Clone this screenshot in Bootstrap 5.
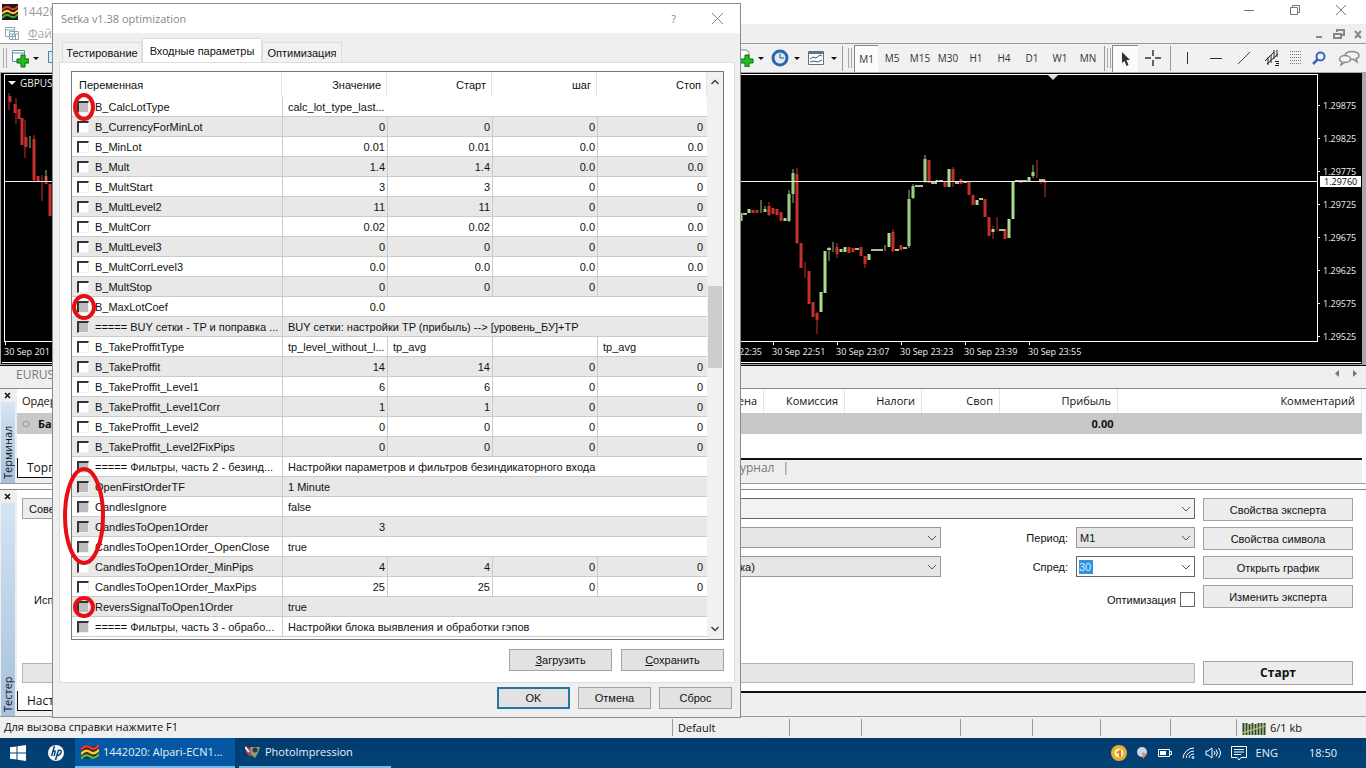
<!DOCTYPE html>
<html lang="ru">
<head>
<meta charset="utf-8">
<meta name="viewport" content="width=device-width, initial-scale=1">
<title>Setka v1.38 optimization</title>
<link href="https://cdn.jsdelivr.net/npm/bootstrap@5.3.0/dist/css/bootstrap.min.css" rel="stylesheet">
<style>
:root{--face:#efefef;--edge:#a0a0a0;--ui:"Open Sans","Noto Sans",sans-serif;--sys:"Liberation Sans",Arial,sans-serif}
body{font:11px/16px var(--sys);color:#111;background:#fff;overflow:hidden}
button,select,input{font:inherit;color:inherit}
svg{display:block;flex:none}
.bar-title{height:24px;font:12px/24px var(--ui);color:#999;padding:0 2px}
.bar-menu{height:20px;background:linear-gradient(90deg,#fff 55px,var(--face) 700px);border-bottom:1px solid #999;font:12px/18px var(--ui);color:#aaa}
.bar-tools{height:28px;background:#f1f1f1;padding-left:3px}
.tool-grid{display:grid;grid-template-columns:14px 14px 24px 10px 28px 8px 8px 8px 24px repeat(8,28px) 4px 6px 26px 30px 4px 30px 28px 28px 28px 20px 26px 34px;font:10px/24px var(--ui);color:#333}
.tool-grid>*{display:flex;align-items:center;justify-content:center;height:27px;padding:0;border:0;background:none}
.tool-grid .pressed{background:#fbfbfb;border-top:1px solid #888;border-left:1px solid #888}
.caret-dn{width:0;height:0;border:3px solid transparent;border-top-color:#111;border-bottom:0;display:inline-block}
.sep-line{width:1px;height:25px;background:#999}
.grip{width:4px;height:20px;border-left:1px solid #aaa;border-right:1px solid #aaa}
.wincap button{border:0;background:none;padding:0;width:46px;height:20px;display:flex;justify-content:center;align-items:center}
/* chart */
.chart-pane{background:#a8a8a8;padding:2px 5px 2px 2px;border-bottom:1px solid #000}
.chart-box{background:#000;color:#eee;font:9px/20px var(--ui);display:grid;grid-template-columns:1fr 43px;grid-template-rows:1fr 20px;border-bottom:1px solid #fff;outline:1px solid #000}
.plot{border:1px solid #fff;margin-left:2px;min-height:260px;overflow:hidden}
.price-list{grid-column:2;grid-row:1/3;padding:15px 0 0 0}
.price-list div{display:flex;align-items:center;gap:3px;height:33px;line-height:33px}
.price-list div::before{content:"";width:2px;height:1px;background:#fff}
.price-now{top:102px;right:0;left:2px;height:11px;background:#fff;color:#000;line-height:11px;padding-left:4px}
.time-list{grid-column:1;grid-row:2;padding-left:2px;white-space:nowrap}
.time-list span{flex:none;width:64px;background:linear-gradient(#fff,#fff) 1px 0/1px 3px no-repeat}
.time-list .t-half{padding-left:31px}
.strip-tabs{height:23px;background:var(--face);border-bottom:1px solid #888;color:#777;font:12px/18px var(--ui)}
/* docked panels */
.dock{border-bottom:1px solid #999}
.dock-side{width:17px;background:var(--face);flex:none}
.dock-side button{height:13px;width:14px;border:0;background:none;padding:0;display:grid;place-items:center}
.dock-name{writing-mode:vertical-rl;transform:rotate(180deg);width:14px;background:linear-gradient(0deg,#d4e4f3,#a5c1dc);font:11px/14px var(--ui);padding-top:4px;margin-left:1px}
.ord-table{table-layout:fixed;width:100%;font:11px/16px var(--ui)}
.ord-table th{font-weight:400;height:24px;padding:0 6px 0 5px;border-right:1px solid #e4e4e4;text-align:right}
.ord-table td{font-weight:700;background:#c8c8c8;height:21px;padding:0 15px 0 5px;text-align:right}
.ord-table .first{text-align:left}
.panel-tabs{background:var(--face);border-top:2px solid #111;color:#777;font:12px/16px var(--ui);height:25px}
.panel-tabs .on{background:#fff;color:#111;border:1px solid #111;border-top:0;width:80px;height:20px;padding:2px 9px 0;margin-top:-2px}
.wbtn{background:#ececec;border:1px solid #a2a2a2;padding:0;text-align:center;border-radius:0;color:#111}
.wsel{appearance:none;border:1px solid #999;border-radius:0;background:#e6e6e6 url("data:image/svg+xml,%3Csvg xmlns='http://www.w3.org/2000/svg' width='10' height='6'%3E%3Cpath d='M1 1l4 4 4-4' fill='none' stroke='%23555'/%3E%3C/svg%3E") no-repeat right 3px center;height:21px;padding:0 3px;line-height:18px}
.wsel.lite{background-color:#fff;border-color:#666}
.wsel.expert-list{background-color:#f2f2f2}
.form-rows{display:grid;grid-auto-rows:21px;row-gap:8px}
.side-btns{width:150px;display:grid;grid-auto-rows:23px;row-gap:6px}
.spread-in{width:119px}
.spread-in input{position:absolute;left:2px;top:3px;width:14px;height:14px;border:0;padding:0;background:#3392e0;color:#cfeaff;outline:0}
.opt-check{appearance:none;width:15px;height:15px;border:1px solid #666;background:#fff;margin:0}
.tester{border-top:1px solid #888;margin-top:5px}
.tester-body{padding:8px 13px 53px 5px}
.expert{width:40px}
.mid{width:210px;padding-left:8px}
.cap{width:119px;text-align:right}
.using{padding-left:12px}
.run-row{padding:0 13px 6px 5px}
.run-bar{height:20px;background:#e6e6e6;border:1px solid #b4b4b4}
.start{width:150px;height:24px;font:700 12px/20px var(--ui)}
.time-list .time-last{margin-right:226px}
.journal{margin-left:643px}
.bar-status{height:21px;background:var(--face);font:11px/20px var(--ui)}
.bar-status .cell{border-left:1px solid #999;margin-top:2px;height:17px;line-height:17px;padding-left:5px}
.c116{width:117px}.c72{width:72px}.c98{width:99px}.c68{width:68px}.c70{width:70px}.c66{width:66px}.c130{width:130px}
/* taskbar */
.taskbar{height:30px;background:linear-gradient(#033b6d,#014375);color:#e8f1fa;font:11px/28px var(--ui)}
.taskbar button{border:0;background:none;color:inherit;padding:0;border-radius:0}
.taskbar .run{border-bottom:2px solid #76b9ed;display:flex;align-items:center;gap:4px;padding-left:6px}
.taskbar .run.on{background:#0458a3}
.t-start{width:36px}.t-hp{width:39px}.t-a{width:160px}.t-b{width:152px}
.tray{gap:9px;padding-right:29px}
.clock{margin-left:22px}
/* dialog */
.dlg{position:absolute;left:52px;top:3px;width:689px;background:var(--face);border:1px solid #8a8a8a;padding:0 5px 8px 6px}
.dlg-head{height:29px;background:#fff;margin:0 -5px 0 -6px;padding:0 17px 0 8px;font:11px/29px var(--ui);color:#888}
.dlg-head button{border:0;background:none;padding:0;color:#888}
.help{margin-right:36px}
.dlg-tabs{padding:5px 0 0 3px;font-size:11px;align-items:flex-end}
.dlg-tabs button{border:1px solid #ddd;border-bottom:0;background:#f2f2f2;height:20px;padding:0;line-height:18px;border-radius:0;color:#111}
.dlg-tabs .active{background:#fff;height:24px;line-height:22px}
.tb80{width:80px}.tb120{width:120px}
.dlg-page{background:#fff;border:1px solid #ddd;padding:8px 10px 11px 11px}
.list-box{border:1px solid #777;height:569px;display:flex;position:relative}
.param{table-layout:fixed;flex:1;width:0;font:11px/16px var(--sys);border-collapse:separate;border-spacing:0;align-self:flex-start}
.param th{height:25px;font-weight:400;text-align:right;padding:0 5px 0 7px;border-right:1px solid #e6e6e6;}
.param td{height:20px;padding:0 2px 0 5px;text-align:right;border-bottom:1px solid #cbcbcb;border-left:1px solid #cbcbcb;white-space:nowrap;overflow:hidden}
.param td:last-child{padding-right:4px}
.param td:first-child,.param th:first-child{text-align:left;border-left:0}
.param td.txt{text-align:left}
.param td.open-l{border-left-color:transparent}
.param tbody tr:nth-child(even) td{background:#e8e8e8}
.param label{display:flex;align-items:center;gap:6px}
.param input{appearance:none;flex:none;width:12px;height:12px;margin:0;background:#fff;border:2px solid;border-color:#333 #eee #eee #333;border-right-width:1px;border-bottom-width:1px}
.param input:disabled{background:#bcbcbc;opacity:1}
.sbar{width:16px;background:#f1f1f1;display:flex;flex-direction:column;align-items:center;justify-content:space-between;padding:4px 0}
.sbar .thumb{width:14px;height:82px;background:#cdcdcd;margin-bottom:57px}
.marks{position:absolute;left:-12px;top:-1px;pointer-events:none}
.dlg .wbtn{background:#e2e2e2;height:22px;line-height:18px}
.dlg .wbtn.ok{border:2px solid #26749f}
.load-row{gap:9px;padding:9px 0 0}
.load-row .wbtn{width:103px}
.end-row{padding-right:3px}
.end-row .wbtn{width:73px}
</style>
</head>
<body>
<div class="vh-100 d-flex flex-column position-relative">
  <header>
    <div class="bar-title d-flex">
      <svg class="mt-1" width="16" height="16" viewBox="0 0 16 16"><rect width="16" height="16" fill="#241708"/><path d="M0 6q4-5 8-2t8-2" stroke="#d33" stroke-width="2" fill="none"/><path d="M0 10q4-5 8-2t8-2" stroke="#fc3" stroke-width="2" fill="none"/><path d="M0 14q4-5 8-2t8-2" stroke="#3a5" stroke-width="2" fill="none"/></svg>
      <span class="ms-1">14420</span>
      <div class="wincap d-flex ms-auto">
        <button aria-label="Свернуть"><svg width="12" height="12"><path d="M1 6.500h10" stroke="#777"/></svg></button>
        <button aria-label="Развернуть"><svg width="12" height="12" fill="none" stroke="#777"><path d="M1.500 3.500h7v7h-7zM3.500 3.500v-2h7v7h-2"/></svg></button>
        <button aria-label="Закрыть"><svg width="12" height="12"><path d="M1 1l10 10M11 1L1 11" stroke="#777"/></svg></button>
      </div>
    </div>
    <div class="bar-menu d-flex align-items-center ps-1">
      <svg width="16" height="15" fill="#fff" stroke="#8aa7b8"><path d="M1.500 1.500h9v9h-9zM1 4h10M5.500 5.500h9v8h-9zM5 8h10M8.500 8v5M11.500 8v5"/></svg>
      <span class="ms-2"><u>Ф</u>ай</span>
      <svg class="ms-auto" width="54" height="14" fill="none" stroke="#888" stroke-width="2"><path d="M4 10h6M22 7h7v4h-7zM25 5V3h7v5h-2M43 4l6 7M49 4l-6 7"/></svg>
    </div>
    <div class="bar-tools d-flex align-items-center">
      <div class="grip"></div>
      <svg class="ms-1" width="18" height="20"><path d="M1.500 2.500h12v11h-12zM1 5h13" fill="#fff" stroke="#5b93a3"/><path d="M10 7h4v4h4v4h-4v4h-4v-4H6v-4h4z" fill="#1fc11f" stroke="#0a6a0a"/></svg>
      <span class="caret-dn ms-1"></span>
      <svg class="ms-2" width="9" height="20"><path d="M1.500 3.500h10v11h-10z" fill="#d9edf5" stroke="#3a87a8"/></svg>
      <div class="tool-grid ms-auto">
        <button aria-label="Индикаторы"><svg width="14" height="18"><path d="M0 1h7l2 3v8H0z" fill="#fff" stroke="#888"/><path d="M5 6h4v4h4v4H9v4H5v-4H0v-4h5z" fill="#1fc11f" stroke="#0a6a0a"/></svg></button>
        <span><i class="caret-dn"></i></span>
        <button aria-label="Периоды"><svg width="18" height="18"><circle cx="9" cy="9" r="7" fill="#dcebf8" stroke="#2c65a8" stroke-width="3"/><path d="M9 4.500V9h4" fill="none" stroke="#357"/></svg></button>
        <span><i class="caret-dn"></i></span>
        <button aria-label="Шаблоны"><svg width="18" height="16"><path d="M1.500 1.500h15v13h-15z" fill="#fff" stroke="#55798a"/><path d="M1 3h16" stroke="#55798a" stroke-width="2"/><path d="M3 9l3-2 3 1 4-3 2 1M3 12l4-1 4 1 4-2" fill="none" stroke="#555"/></svg></button>
        <span><i class="caret-dn"></i></span>
        <span><i class="sep-line"></i></span>
        <span><i class="grip"></i></span>
        <button class="pressed">M1</button><button>M5</button><button>M15</button><button>M30</button><button>H1</button><button>H4</button><button>D1</button><button>W1</button><button>MN</button>
        <span><i class="sep-line"></i></span>
        <span><i class="grip"></i></span>
        <button class="pressed" aria-label="Курсор"><svg width="12" height="16"><path d="M2 1l8 8H6.500l2 5-2 1-2-5L2 12z" fill="#333"/></svg></button>
        <button aria-label="Перекрестие"><svg width="16" height="16"><path d="M8 0v6M8 10v6M0 8h6M10 8h6" stroke="#333" stroke-width="1.500"/></svg></button>
        <span><i class="sep-line"></i></span>
        <button aria-label="Вертикальная линия"><svg width="14" height="14"><path d="M7.500 1v12" stroke="#333"/></svg></button>
        <button aria-label="Горизонтальная линия"><svg width="14" height="14"><path d="M1 7.500h12" stroke="#333"/></svg></button>
        <button aria-label="Трендовая линия"><svg width="14" height="14"><path d="M1 13L13 1" stroke="#444"/></svg></button>
        <button aria-label="Канал"><svg width="17" height="18" fill="none" stroke="#222"><path d="M1 12l9-9M3 15L14 5M4 8v8M7 6v8M10 1v9M13 1v7M11 12.500h4M11 16.500h4M12 14.500h3"/></svg></button>
        <button aria-label="Фибоначчи"><svg width="14" height="16" stroke="#777" stroke-dasharray="1 1"><path d="M1 1.500h12M1 4.500h12M1 7.500h12M1 10.500h12M1 13.500h12"/></svg></button>
        <button aria-label="Поиск"><svg width="14" height="15"><circle cx="8.500" cy="5.500" r="4" fill="#eef6ff" stroke="#3964b8" stroke-width="2"/><path d="M5.500 8.500L1 13" stroke="#3964b8" stroke-width="2.500"/></svg></button>
        <button aria-label="Чат"><svg width="22" height="16" fill="#f4f4f4" stroke="#8a8a8a" stroke-width="1.500"><ellipse cx="14" cy="5.500" rx="7" ry="4"/><path d="M18 8l1 4-4-3"/><ellipse cx="7" cy="9" rx="5.500" ry="3.500"/><path d="M4 12l-1 3 4-3"/></svg></button>
      </div>
    </div>
  </header>

  <main class="chart-pane flex-grow-1 d-flex">
    <div class="chart-box flex-grow-1">
      <div class="plot">
        <svg width="100%" height="100%" aria-label="GBPUSD">
          <path d="M3 6h8l-4 4z" fill="#eee"/>
          <text x="15" y="12" fill="#eee" font-size="10">GBPUS</text>
          <g transform="translate(-5 -75)" fill="none">
            <path stroke="#c8302c" stroke-width="3" d="M10 96v6M15 104v9M19 109v10M22 118v27M26 137v10M34 139v41M38 176v5M46 176v8M50 184v32M753 210v3M757 210v3M769 206v9M773 208v6M777 209v6M781 212v9M797 174v69M801 243v25M809 271v33M813 302v15M817 313v7M837 247v7M849 247v6M853 248v4M861 247v9M865 256v8M893 232v19M901 245v5M929 160v23M945 182v5M953 169v13M961 179v5M969 181v14M973 195v10M985 199v18M989 217v19M1005 229v10M1021 180v3M1045 180v3"/>
            <path stroke="#c8302c" d="M9 93v17M16 98v26M25 120v38M34 135v47M42 175v26M769 202v14M797 168v76M805 262v16M817 312v22M837 243v15M865 256v12M893 229v23M953 167v20M993 226v13M997 217v14M1037 160v18M1041 180v4M1045 180v17"/>
            <path stroke="#a9dd8d" stroke-width="3" d="M741 213v8M749 209v4M765 209v3M785 218v3M789 194v27M793 173v21M821 292v20M825 251v42M841 249v3M845 247v5M869 254v6M889 233v14M909 199v47M913 186v12M925 159v22M937 180v2M949 169v18M977 200v5M993 229v3M1009 219v19M1013 181v38M1029 177v5M1033 172v4"/>
            <path stroke="#8bbf79" d="M761 200v13M765 206v6M789 190v32M793 169v34M829 247v14M833 242v10M885 245v6M909 190v58M913 184v15M925 155v28M1033 165v13M30 136v12M46 170v12"/>
            <path stroke="#b9b9a0" stroke-width="2" d="M743 214h4M827 249h4M855 249h4M871 250h12M895 250h4M903 248h4M915 186h8M931 183h6M939 181h4M955 183h4M963 182h4M979 199h4M999 230h6M1015 181h12M1039 180h6"/>
            <path stroke="#eee" d="M4 181.500H9999"/>
            <path fill="#ddd" d="M1048 75h10l-5 5z"/>
          </g>
        </svg>
      </div>
      <div class="price-list position-relative">
        <div>1.29875</div><div>1.29825</div><div>1.29775</div><div>1.29725</div><div>1.29675</div><div>1.29625</div><div>1.29575</div><div>1.29525</div>
        <span class="price-now position-absolute">1.29760</span>
      </div>
      <div class="time-list d-flex"><span class="flex-grow-1">30 Sep 201</span><span class="t-half">22:35</span><span>30 Sep 22:51</span><span>30 Sep 23:07</span><span>30 Sep 23:23</span><span>30 Sep 23:39</span><span class="time-last">30 Sep 23:55</span></div>
    </div>
  </main>
  <nav class="strip-tabs d-flex ps-3"><span>EURUS</span><svg class="ms-auto me-2" width="24" height="16" fill="#777"><path d="M5 4v7L1 7.500zM19 4v7l4-3.500z"/></svg></nav>

  <section class="dock d-flex">
    <div class="dock-side d-flex flex-column"><button aria-label="Закрыть терминал"><svg width="7" height="7"><path d="M1 1l5 5M6 1L1 6" stroke="#111" stroke-width="1.500"/></svg></button><div class="dock-name flex-grow-1">Терминал</div></div>
    <div class="flex-grow-1 pe-1">
      <table class="ord-table">
        <colgroup><col style="width:70px"><col><col style="width:81px"><col style="width:77px"><col style="width:78px"><col style="width:118px"><col style="width:244px"></colgroup>
        <thead><tr><th class="first">Ордер</th><th>ена</th><th>Комиссия</th><th>Налоги</th><th>Своп</th><th>Прибыль</th><th>Комментарий</th></tr></thead>
        <tbody><tr><td class="first"><span class="d-flex align-items-center gap-2"><svg width="8" height="8"><circle cx="4" cy="4" r="3" fill="none" stroke="#999"/></svg>Ба</span></td><td></td><td></td><td></td><td></td><td class="pe-1">0.00</td><td></td></tr></tbody>
      </table>
      <div class="pt-4"></div>
      <div class="panel-tabs d-flex"><span class="on">Торг</span><span class="journal">урнал</span><span class="ms-2">|</span></div>
    </div>
  </section>

  <section class="dock d-flex tester">
    <div class="dock-side d-flex flex-column"><button aria-label="Закрыть тестер"><svg width="7" height="7"><path d="M1 1l5 5M6 1L1 6" stroke="#111" stroke-width="1.500"/></svg></button><div class="dock-name flex-grow-1">Тестер</div></div>
    <div class="flex-grow-1 d-flex flex-column">
      <div class="tester-body d-flex gap-2 flex-grow-1">
        <div class="flex-grow-1 form-rows">
          <div class="d-flex"><button class="wbtn expert">Сове</button><select class="wsel lite expert-list flex-grow-1" aria-label="Эксперт"></select></div>
          <div class="d-flex justify-content-end align-items-center gap-2"><select class="wsel mid" aria-label="Символ"></select><label class="cap" for="per">Период:</label><select id="per" class="wsel spread-in"><option>M1</option></select></div>
          <div class="d-flex justify-content-end align-items-center gap-2"><select class="wsel mid" aria-label="Модель"><option>ка)</option></select><label class="cap" for="spr">Спред:</label><div class="wsel lite spread-in position-relative"><input id="spr" value="30"></div></div>
          <div class="d-flex align-items-center gap-1 pt-2"><span class="using">Исп</span><label class="ms-auto" for="opt">Оптимизация</label><input id="opt" type="checkbox" class="opt-check"></div>
        </div>
        <div class="side-btns"><button class="wbtn">Свойства эксперта</button><button class="wbtn">Свойства символа</button><button class="wbtn">Открыть график</button><button class="wbtn">Изменить эксперта</button></div>
      </div>
      <div class="run-row d-flex align-items-center gap-2"><div class="run-bar flex-grow-1"></div><button class="wbtn start">Старт</button></div>
      <div class="panel-tabs d-flex"><span class="on">Наст</span></div>
    </div>
  </section>

  <footer>
    <div class="bar-status d-flex"><span class="flex-grow-1 ps-1">Для вызова справки нажмите F1</span><span class="cell c116">Default</span><span class="cell c72"></span><span class="cell c98"></span><span class="cell c72"></span><span class="cell c68"></span><span class="cell c70"></span><span class="cell c66"></span><span class="cell c130 d-flex gap-1"><svg class="mt-1" width="24" height="12"><path d="M1.500 0v12M4.500 0v12M7.500 1v11M10.500 0v12M13.500 1v11M16.500 0v12M19.500 0v12M22.500 0v12" stroke="#2d4b1e" stroke-width="2"/><path d="M0 10L23 3" stroke="#cfd66c"/></svg>6/1 kb</span></div>
    <div class="taskbar d-flex">
      <button class="t-start" aria-label="Пуск"><svg class="mx-auto" width="16" height="16" fill="#fff"><path d="M0 2.300L6.500 1.400v6.100H0zM7.500 1.200L16 0v7.500H7.500zM0 8.500h6.500v6.100L0 13.700zM7.500 8.500H16V16l-8.500-1.200z"/></svg></button>
      <button class="t-hp" aria-label="HP"><svg class="mx-auto" width="16" height="16"><circle cx="8" cy="8" r="8" fill="#f4f4f4"/><path d="M6.500 1L3.500 11M5 6.500q3-1.500 2 1L6 11M10.500 5L7.500 15M10 5.500q4-1 3 2t-4 3" fill="none" stroke="#023f72" stroke-width="1.400"/></svg></button>
      <button class="run on t-a"><svg width="18" height="18" viewBox="0 0 16 16"><path d="M1 3h14v11H1z" fill="#3b2410"/><path d="M0 6q4-5 8-2t8-2" stroke="#e33" stroke-width="2" fill="none"/><path d="M0 10q4-5 8-2t8-2" stroke="#fc3" stroke-width="2" fill="none"/><path d="M0 14q4-5 8-2t8-2" stroke="#4b5" stroke-width="2" fill="none"/></svg>1442020: Alpari-ECN1...</button>
      <button class="run t-b ms-1"><svg width="16" height="16"><path d="M1 2l6 4-2 7-4-5z" fill="#c43a58"/><path d="M5 3h10l-2 6-3 5-4-3z" fill="#8a9a78"/><circle cx="10" cy="6" r="2.500" fill="#2c3a34"/><path d="M0 3l4 5" stroke="#eee" stroke-width="2"/></svg>PhotoImpression</button>
      <div class="ms-auto d-flex align-items-center tray">
        <svg width="16" height="16"><circle cx="8" cy="8" r="8" fill="#e9ad35"/><circle cx="8" cy="8" r="4.500" fill="#fff0c0"/><path d="M9 12V6L6 8" fill="none" stroke="#d67e12" stroke-width="2"/></svg>
        <svg width="12" height="14"><circle cx="6" cy="6" r="5" fill="#c9d6e6"/><path d="M6 6l5 2-4 5z" fill="#e08a70"/></svg>
        <svg width="16" height="12" fill="none" stroke="#fff"><path d="M1.500 2.500h11v7h-11zM13 4.500h1.500v3H13"/><path d="M3 4h6v4H3z" fill="#fff" stroke="none"/></svg>
        <svg width="14" height="14" fill="none" stroke="#fff"><path d="M1 12A11 11 0 0 1 12 2M4 12a8 8 0 0 1 8-7M7 12a5 5 0 0 1 5-4"/><circle cx="11" cy="11.500" r="1"/></svg>
        <svg width="17" height="14" fill="none" stroke="#fff"><path d="M1 5h2l4-3v10L3 9H1zM9 5q2 2 0 4M11 3.500q3 3.500 0 7M13.500 2q4 5 0 10"/></svg>
        <svg width="16" height="16" fill="none" stroke="#fff"><path d="M.5 1.500h15v11H10l-2 2.500-2-2.500H.5zM3 4.500h10M3 7h10M3 9.500h7"/></svg>
        <span>ENG</span><span class="clock">18:50</span>
      </div>
    </div>
  </footer>

  <div class="dlg" role="dialog" aria-label="Setka v1.38 optimization">
    <div class="dlg-head d-flex align-items-center"><span>Setka v1.38 optimization</span><button class="ms-auto help" aria-label="Справка">?</button><button aria-label="Закрыть"><svg width="11" height="11"><path d="M0 0l11 11M11 0L0 11" stroke="#888"/></svg></button></div>
    <div class="dlg-tabs d-flex"><button class="tb80">Тестирование</button><button class="active tb120">Входные параметры</button><button class="tb80">Оптимизация</button></div>
    <div class="dlg-page">
      <div class="list-box">
        <table class="param">
          <colgroup><col style="width:210px"><col style="width:105px"><col style="width:105px"><col style="width:105px"><col></colgroup>
          <thead><tr><th>Переменная</th><th>Значение</th><th>Старт</th><th>шаг</th><th>Стоп</th></tr></thead>
          <tbody>
          <tr><td><label><input type="checkbox" disabled>B_CalcLotType</label></td><td class="txt" colspan="4">calc_lot_type_last...</td></tr>
          <tr><td><label><input type="checkbox">B_CurrencyForMinLot</label></td><td>0</td><td>0</td><td>0</td><td>0</td></tr>
          <tr><td><label><input type="checkbox">B_MinLot</label></td><td>0.01</td><td>0.01</td><td>0.0</td><td>0.0</td></tr>
          <tr><td><label><input type="checkbox">B_Mult</label></td><td>1.4</td><td>1.4</td><td>0.0</td><td>0.0</td></tr>
          <tr><td><label><input type="checkbox">B_MultStart</label></td><td>3</td><td>3</td><td>0</td><td>0</td></tr>
          <tr><td><label><input type="checkbox">B_MultLevel2</label></td><td>11</td><td>11</td><td>0</td><td>0</td></tr>
          <tr><td><label><input type="checkbox">B_MultCorr</label></td><td>0.02</td><td>0.02</td><td>0.0</td><td>0.0</td></tr>
          <tr><td><label><input type="checkbox">B_MultLevel3</label></td><td>0</td><td>0</td><td>0</td><td>0</td></tr>
          <tr><td><label><input type="checkbox">B_MultCorrLevel3</label></td><td>0.0</td><td>0.0</td><td>0.0</td><td>0.0</td></tr>
          <tr><td><label><input type="checkbox">B_MultStop</label></td><td>0</td><td>0</td><td>0</td><td>0</td></tr>
          <tr><td><label><input type="checkbox" disabled>B_MaxLotCoef</label></td><td>0.0</td><td class="open-l" colspan="3"></td></tr>
          <tr><td><label><input type="checkbox" disabled>===== BUY сетки - TP и поправка ...</label></td><td class="txt" colspan="4">BUY сетки: настройки TP (прибыль) --&gt; [уровень_БУ]+TP</td></tr>
          <tr><td><label><input type="checkbox">B_TakeProffitType</label></td><td class="txt">tp_level_without_l...</td><td class="txt">tp_avg</td><td></td><td class="txt">tp_avg</td></tr>
          <tr><td><label><input type="checkbox">B_TakeProffit</label></td><td>14</td><td>14</td><td>0</td><td>0</td></tr>
          <tr><td><label><input type="checkbox">B_TakeProffit_Level1</label></td><td>6</td><td>6</td><td>0</td><td>0</td></tr>
          <tr><td><label><input type="checkbox">B_TakeProffit_Level1Corr</label></td><td>1</td><td>1</td><td>0</td><td>0</td></tr>
          <tr><td><label><input type="checkbox">B_TakeProffit_Level2</label></td><td>0</td><td>0</td><td>0</td><td>0</td></tr>
          <tr><td><label><input type="checkbox">B_TakeProffit_Level2FixPips</label></td><td>0</td><td>0</td><td>0</td><td>0</td></tr>
          <tr><td><label><input type="checkbox" disabled>===== Фильтры, часть 2 - безинд...</label></td><td class="txt" colspan="4">Настройки параметров и фильтров безиндикаторного входа</td></tr>
          <tr><td><label><input type="checkbox" disabled>OpenFirstOrderTF</label></td><td class="txt" colspan="4">1 Minute</td></tr>
          <tr><td><label><input type="checkbox" disabled>CandlesIgnore</label></td><td class="txt" colspan="4">false</td></tr>
          <tr><td><label><input type="checkbox" disabled>CandlesToOpen1Order</label></td><td>3</td><td class="open-l" colspan="3"></td></tr>
          <tr><td><label><input type="checkbox" disabled>CandlesToOpen1Order_OpenClose</label></td><td class="txt" colspan="4">true</td></tr>
          <tr><td><label><input type="checkbox">CandlesToOpen1Order_MinPips</label></td><td>4</td><td>4</td><td>0</td><td>0</td></tr>
          <tr><td><label><input type="checkbox">CandlesToOpen1Order_MaxPips</label></td><td>25</td><td>25</td><td>0</td><td>0</td></tr>
          <tr><td><label><input type="checkbox" disabled>ReversSignalToOpen1Order</label></td><td class="txt" colspan="4">true</td></tr>
          <tr><td><label><input type="checkbox" disabled>===== Фильтры, часть 3 - обрабо...</label></td><td class="txt" colspan="4">Настройки блока выявления и обработки гэпов</td></tr>
          </tbody>
        </table>
        <div class="sbar"><svg width="10" height="12" fill="none" stroke="#444" stroke-width="1.500"><path d="M1.500 8L5 4.500 8.500 8"/></svg><div class="thumb"></div><svg width="10" height="12" fill="none" stroke="#444" stroke-width="1.500"><path d="M1.500 4L5 7.500 8.500 4"/></svg></div>
        <svg class="marks" width="50" height="569" fill="none" stroke="#e60f16" stroke-width="4"><ellipse cx="24" cy="36" rx="9" ry="12"/><ellipse cx="24" cy="236" rx="10" ry="11"/><ellipse cx="24" cy="445" rx="19" ry="47"/><circle cx="24" cy="536" r="9"/></svg>
      </div>
      <div class="d-flex justify-content-end load-row"><button class="wbtn"><u>З</u>агрузить</button><button class="wbtn"><u>С</u>охранить</button></div>
    </div>
    <div class="d-flex justify-content-end gap-2 pt-1 end-row"><button class="wbtn ok">OK</button><button class="wbtn">Отмена</button><button class="wbtn">Сброс</button></div>
  </div>
</div>
</body>
</html>
